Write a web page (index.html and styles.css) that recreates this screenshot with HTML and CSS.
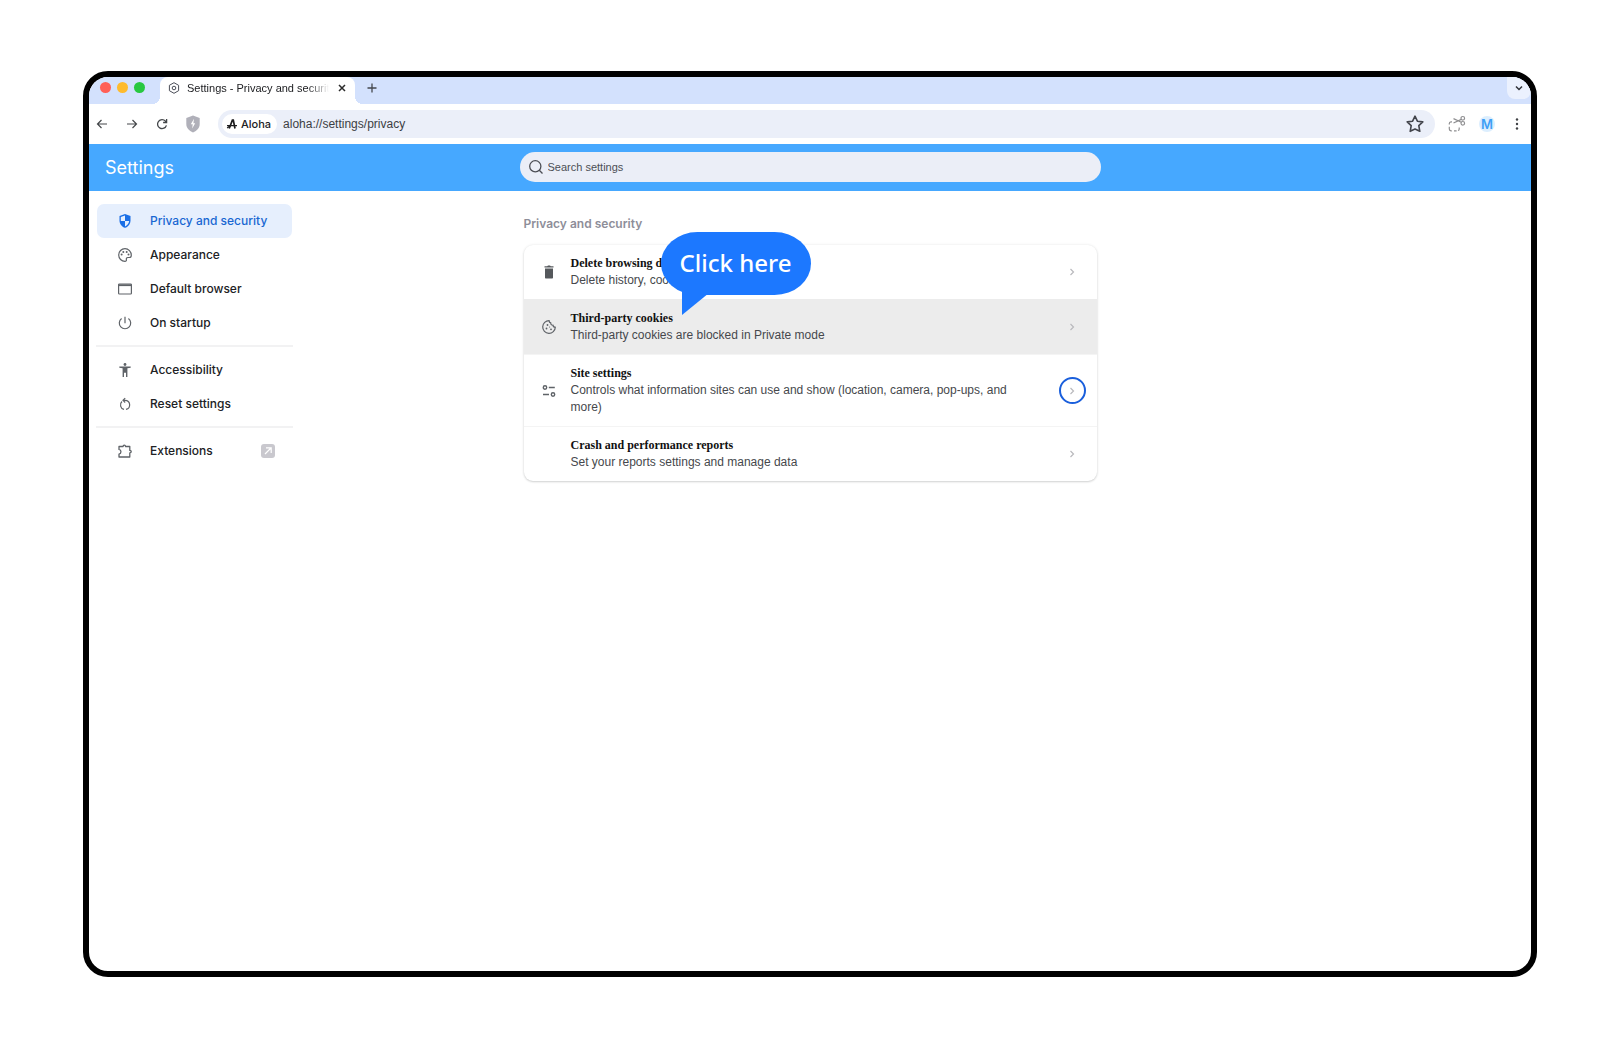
FILE: index.html
```html
<!DOCTYPE html>
<html lang="en">
<head>
<meta charset="utf-8">
<meta name="viewport" content="width=device-width, initial-scale=1">
<title>Settings - Privacy and security</title>
<link rel="stylesheet" href="styles.css">
</head>
<body>
<div class="window">
  <div class="tabstrip">
    <div class="lights"><span class="light red"></span><span class="light yellow"></span><span class="light green"></span></div>
    <div class="tab">
      <svg class="i12" viewBox="0 0 12 12" fill="none" stroke="#4a4d57"><path d="M6 .7 10.6 3.300v5.400L6 11.300 1.400 8.700V3.300z" stroke-linejoin="round"/><circle cx="6" cy="6" r="1.800"/></svg>
      <span class="tab-title">Settings - Privacy and security</span>
      <button class="icon-btn" aria-label="Close tab"><svg class="i8" viewBox="0 0 8 8" fill="none" stroke="#2b2b2b" stroke-width="1.500"><path d="M1 1l6 6M7 1 1 7"/></svg></button>
    </div>
    <button class="icon-btn new-tab" aria-label="New tab"><svg class="i10" viewBox="0 0 10 10" fill="none" stroke="#44474e" stroke-width="1.300"><path d="M5 .5v9M.5 5h9"/></svg></button>
    <button class="tab-search" aria-label="Search tabs"><svg class="i8" viewBox="0 0 8 8" fill="none" stroke="#303238" stroke-width="1.500"><path d="M1 2.500l3 3 3-3"/></svg></button>
  </div>

  <div class="toolbar">
    <div class="nav-buttons">
      <button class="icon-btn" aria-label="Back"><svg class="i12" viewBox="0 0 12 12" fill="none" stroke="#44474a" stroke-width="1.200"><path d="M11 6H1.500M5.500 2 1.500 6l4 4"/></svg></button>
      <button class="icon-btn" aria-label="Forward"><svg class="i12" viewBox="0 0 12 12" fill="none" stroke="#44474a" stroke-width="1.200"><path d="M1 6h9.500M6.500 2l4 4-4 4"/></svg></button>
      <button class="icon-btn" aria-label="Reload"><svg class="i12" viewBox="0 0 12 12" fill="none" stroke="#44474a" stroke-width="1.300"><path d="M10.400 7.300A4.500 4.500 0 1 1 9.500 3.200l1 1.100M10.600 1v3.500H7.100"/></svg></button>
      <button class="icon-btn" aria-label="Shields"><svg class="shield" viewBox="0 0 14 18"><path d="M7 .5 13.700 3v6c0 4-2.700 6.800-6.700 8.500C3 15.800.3 13 .3 9V3z" fill="#b0b0b9"/><path d="M8 3.800 4.800 9.300h1.900L6.200 13.400l3-5.200H7.400z" fill="#fff"/></svg></button>
    </div>
    <div class="omnibox">
      <button class="chip"><svg class="i12" viewBox="0 0 12 12" fill="none" stroke="#1c1c1e"><path d="M3.200 10.500 6.400 2.200h.9L9 10.500" stroke-width="1.700"/><path d="M1 7.600h10" stroke-width="1.400"/><path d="M1.200 10 4 7.800" stroke-width="1.300"/></svg>Aloha</button>
      <input class="url" type="text" aria-label="Address" value="aloha://settings/privacy">
      <button class="icon-btn" aria-label="Bookmark this tab"><svg class="i18" viewBox="0 0 18 18" fill="none" stroke="#44464d" stroke-width="1.600" stroke-linejoin="round"><path d="M9 1.200l2.400 5 5.400.7-4 3.800 1 5.600L9 14l-4.800 2.300 1-5.600-4-3.800 5.400-.7z"/></svg></button>
    </div>
    <div class="actions">
      <button class="icon-btn" aria-label="Screenshot"><svg class="i18" viewBox="0 0 18 18" fill="none" stroke="#8f8f91" stroke-width="1.200"><circle cx="14.800" cy="3.300" r="1.800"/><circle cx="14.800" cy="8.300" r="1.800"/><path d="M13.300 4.400 5.500 8M13.300 7.200 5.500 3.600"/><path d="M4 6.800H3A1.800 1.800 0 0 0 1.300 8.600V9.500M1.300 11.800v2.200A1.800 1.800 0 0 0 3 15.800h.8M6 15.800h2.600M10 15.500c.8-.2 1.200-.8 1.200-1.600v-1.500"/></svg></button>
      <button class="avatar" aria-label="Profile">M</button>
      <button class="icon-btn" aria-label="Menu"><svg class="i18" viewBox="0 0 18 18" fill="#3f4145"><circle cx="9" cy="4.500" r="1.200"/><circle cx="9" cy="9" r="1.200"/><circle cx="9" cy="13.500" r="1.200"/></svg></button>
    </div>
  </div>

  <header class="header">
    <h1>Settings</h1>
    <label class="search">
      <svg class="i14" viewBox="0 0 14 14" fill="none" stroke="#4c4e55" stroke-width="1.300"><circle cx="6.300" cy="6.300" r="5.600"/><path d="M10.300 10.300 13.500 13.500"/></svg>
      <input type="search" placeholder="Search settings" aria-label="Search settings">
    </label>
  </header>

  <div class="content">
    <nav class="sidebar">
      <a class="item active" href="#privacy"><svg class="i14" viewBox="0 0 14 14"><path d="M7 0 12.500 2v4.400c0 3.400-2.300 6.300-5.500 7.400C3.800 12.700 1.500 9.800 1.500 6.400V2z" fill="#1a6fe6"/><path d="M7 1.600V7H2.800V3.100zM7 7h4.200c-.3 2.500-2 4.500-4.200 5.400z" fill="#e6effd"/></svg>Privacy and security</a>
      <a class="item" href="#appearance"><svg class="i14" viewBox="0 0 14 14" fill="none" stroke="#5f6368" stroke-width="1.200"><path d="M7 .7a6.300 6.300 0 1 0 0 12.600c1 0 1.500-.7 1.400-1.500-.2-1.300-.1-2.300 1.500-2.300h1.400c1.300 0 2-1 2-2.300C13.300 3.500 10.500.7 7 .7z"/><g fill="#5f6368" stroke="none"><circle cx="3.600" cy="6.600" r="1"/><circle cx="5.300" cy="3.900" r="1"/><circle cx="8.700" cy="3.900" r="1"/><circle cx="10.500" cy="6.500" r="1"/></g></svg>Appearance</a>
      <a class="item" href="#browser"><svg class="i14" viewBox="0 0 14 14" fill="none" stroke="#5f6368" stroke-width="1.200"><rect x=".6" y="2" width="12.800" height="10" rx=".8"/><path d="M.6 3.200h12.800" stroke-width="1.800"/></svg>Default browser</a>
      <a class="item" href="#startup"><svg class="i14" viewBox="0 0 14 14" fill="none" stroke="#5f6368" stroke-width="1.200"><path d="M7 .8v6.400M3.600 2.500a5.700 5.700 0 1 0 6.800 0"/></svg>On startup</a>
      <hr>
      <a class="item" href="#accessibility"><svg class="i14" viewBox="0 0 14 14" fill="#5f6368"><circle cx="7" cy="1.500" r="1.400"/><path d="M1.300 3.500h11.400v1.300L9.400 5.200V14H8V9.800H6V14H4.600V5.200l-3.300-.4z"/></svg>Accessibility</a>
      <a class="item" href="#reset"><svg class="i14" viewBox="0 0 14 14" fill="none" stroke="#5f6368" stroke-width="1.200"><path d="M6 12.400A4.600 4.600 0 0 1 4 4.500M8 12.400a4.600 4.600 0 0 0-1-9.100H5.300M7.200 1.100 5 3.300l2.200 2.200"/></svg>Reset settings</a>
      <hr>
      <a class="item" href="#extensions"><svg class="i14" viewBox="0 0 14 14" fill="none" stroke="#5f6368" stroke-width="1.300" stroke-linejoin="round"><path d="M1 2.500h4.100c0-1.900 2.400-1.900 2.400 0H11.800v3.900c1.900 0 1.900 2.400 0 2.400V13H1V10.200c2.600-.6 2.600-4.200 0-4.800z"/></svg>Extensions<svg class="i14 external" viewBox="0 0 14 14" fill="none"><rect width="14" height="14" rx="3" fill="#c9c8ce"/><path d="M4 10l5.500-5.500M5 3.800h5.200V9" stroke="#fff" stroke-width="1.200"/></svg></a>
    </nav>

    <main class="main">
      <h2>Privacy and security</h2>
      <div class="card">
        <section class="row">
          <svg class="i14" viewBox="0 0 14 14" fill="#55585c"><path d="M2.500 1.200h2.700L6 .4h2l.8.800h2.700v1.400h-9zM3 3.400h8v9.200c0 .6-.4 1-1 1H4c-.6 0-1-.4-1-1z"/></svg>
          <div class="text"><h3>Delete browsing data</h3><p>Delete history, cookies, cache, and more</p></div>
          <button class="go" aria-label="Delete browsing data"><svg class="i8" viewBox="0 0 8 8"><path d="M2.500 1l3 3-3 3"/></svg></button>
        </section>
        <section class="row hover">
          <svg class="i14" viewBox="0 0 14 14" fill="none" stroke="#5f6368" stroke-width="1.200"><path d="M7.200.7a6.300 6.300 0 1 0 6.100 6.500c-1.300 0-2.200-.8-2.200-2-1.500.2-2.600-.9-2.300-2.300C7.700 2.700 7.100 1.800 7.200.7z" stroke-linejoin="round"/><g fill="#5f6368" stroke="none"><circle cx="5.500" cy="5" r=".9"/><circle cx="4.500" cy="8.500" r=".9"/><circle cx="9" cy="9.300" r=".9"/><circle cx="7.600" cy="7" r=".6"/></g></svg>
          <div class="text"><h3>Third-party cookies</h3><p>Third-party cookies are blocked in Private mode</p></div>
          <button class="go" aria-label="Third-party cookies"><svg class="i8" viewBox="0 0 8 8"><path d="M2.500 1l3 3-3 3"/></svg></button>
        </section>
        <section class="row">
          <svg class="i14" viewBox="0 0 14 14" fill="none" stroke="#5f6368" stroke-width="1.400"><circle cx="3" cy="3.500" r="1.700"/><circle cx="11" cy="10.500" r="1.700"/><path d="M6.800 3.500h6M1 10.500h6"/></svg>
          <div class="text"><h3>Site settings</h3><p>Controls what information sites can use and show (location, camera, pop-ups, and more)</p></div>
          <button class="go focused" aria-label="Site settings"><svg class="i8" viewBox="0 0 8 8"><path d="M2.500 1l3 3-3 3"/></svg></button>
        </section>
        <section class="row no-icon">
          <div class="text"><h3>Crash and performance reports</h3><p>Set your reports settings and manage data</p></div>
          <button class="go" aria-label="Crash and performance reports"><svg class="i8" viewBox="0 0 8 8"><path d="M2.500 1l3 3-3 3"/></svg></button>
        </section>
        <div class="callout">Click here<svg class="tail" viewBox="0 0 30 28"><path d="M0 0v28L27 6V0z" fill="#1c78ff"/></svg></div>
      </div>
    </main>
  </div>
</div>
</body>
</html>
```
FILE: styles.css
```css
* { box-sizing: border-box; }

body {
  margin: 0;
  min-height: 100vh;
  padding: 71px 84px 71px 83px;
  display: flex;
  background: #fff;
  font-family: Inter, "Liberation Sans", sans-serif;
  font-size: 12px;
  color: #202124;
}

h1, h2, h3, p { margin: 0; }
svg { display: block; flex: none; }
button, input { font: inherit; color: inherit; border: 0; padding: 0; background: none; }

.i8 { width: 8px; height: 8px; }
.i10 { width: 10px; height: 10px; }
.i12 { width: 12px; height: 12px; }
.i14 { width: 14px; height: 14px; }
.i18 { width: 18px; height: 18px; }
.shield { width: 14px; height: 18px; }
.icon-btn { display: flex; align-items: center; justify-content: center; }

.window {
  flex: 1;
  min-width: 0;
  border: 6px solid #000;
  border-radius: 25px;
  overflow: hidden;
}

/* Tab strip */
.tabstrip {
  display: flex;
  height: 27px;
  background: #d3e1fd;
}
.lights {
  display: flex;
  align-items: center;
  gap: 6px;
  width: 71px;
  padding: 0 0 6px 11px;
}
.light { width: 11px; height: 11px; border-radius: 50%; }
.red { background: #ff5f57; }
.yellow { background: #febb2e; }
.green { background: #28c840; }
.tab {
  position: relative;
  display: flex;
  align-items: center;
  width: 195px;
  padding: 0 9px 6px 8px;
  border-radius: 8px 8px 0 0;
  background: #fff;
}
.tab::before, .tab::after {
  content: "";
  position: absolute;
  bottom: 0;
  width: 8px;
  height: 8px;
}
.tab::before { left: -8px; background: radial-gradient(circle at 0 0, transparent 8px, #fff 8px); }
.tab::after { right: -8px; background: radial-gradient(circle at 100% 0, transparent 8px, #fff 8px); }
.tab-title {
  flex: 1;
  margin: 0 9px 0 7px;
  overflow: hidden;
  white-space: nowrap;
  font-family: "Liberation Sans", sans-serif;
  font-size: 11px;
  line-height: 16px;
  -webkit-mask-image: linear-gradient(to right, #000 85%, transparent);
  mask-image: linear-gradient(to right, #000 85%, transparent);
}
.new-tab { width: 34px; padding-bottom: 6px; }
.tab-search {
  display: flex;
  align-items: center;
  justify-content: center;
  width: 24px;
  height: 22px;
  margin-left: auto;
  border-radius: 0 0 8px 8px;
  background: #ebf1fe;
}

/* Toolbar */
.toolbar {
  display: flex;
  align-items: center;
  height: 40px;
  padding: 0 5px 1px 7px;
}
.nav-buttons { display: flex; align-items: center; gap: 18px; width: 122px; }
.omnibox {
  flex: 1;
  display: flex;
  align-items: center;
  height: 28px;
  padding: 0 11px 0 4px;
  border-radius: 14px;
  background: #ebeff9;
}
.chip {
  display: flex;
  align-items: center;
  gap: 3px;
  height: 20px;
  padding: 0 6px 0 4px;
  border-radius: 10px;
  background: #fff;
  font-size: 11px;
  font-weight: 500;
}
.url {
  flex: 1;
  margin-left: 6px;
  color: #3c3e43;
  font-family: "Liberation Sans", sans-serif;
  outline: 0;
}
.actions { display: flex; align-items: center; gap: 13px; margin-left: 13px; }
.avatar {
  width: 16px;
  height: 16px;
  border-radius: 50%;
  background: #dceefe;
  color: #3d9ff5;
  font-size: 13px;
  font-weight: 600;
  line-height: 16px;
}

/* Blue header */
.header {
  display: grid;
  grid-template-columns: 1fr minmax(0, 581px) 1fr;
  align-items: center;
  height: 47px;
  padding: 0 8px;
  background: #46a8ff;
}
h1 { padding-left: 8px; color: #fff; font-size: 18px; font-weight: 400; }
.search {
  display: flex;
  align-items: center;
  gap: 5px;
  height: 30px;
  margin-bottom: 1px;
  padding: 0 9px;
  border-radius: 15px;
  background: #ebeef7;
}
.search input {
  flex: 1;
  font-family: "Liberation Sans", sans-serif;
  font-size: 11px;
  outline: 0;
  appearance: none;
}
.search input::placeholder { color: #4c4e55; opacity: 1; }

/* Page */
.content {
  display: grid;
  grid-template-columns: 1fr minmax(0, 573px) 1fr;
  align-items: start;
  padding: 13px 8px 0;
}
.sidebar { width: 195px; }
.item {
  display: flex;
  align-items: center;
  gap: 18px;
  height: 34px;
  padding: 0 17px 1px 21px;
  border-radius: 7px;
  color: #202124;
  font-weight: 500;
  text-decoration: none;
}
.active { background: #e6effd; color: #1967d2; }
.external { margin-left: auto; }
hr { height: 2px; margin: 5px -1px 6px; border: 0; background: #f2f2f3; }

h2 {
  margin-bottom: 12px;
  padding-top: 11px;
  color: #8e8e99;
  font-size: 12px;
  font-weight: 600;
  line-height: 18px;
}
.card {
  position: relative;
  border-radius: 9px;
  background: #fff;
  box-shadow: 0 1px 2px rgba(60, 64, 67, .2), 0 0 3px rgba(60, 64, 67, .1);
}
.row { display: flex; align-items: center; padding: 10px 11px 10px 18px; }
.row + .row { border-top: 1px solid #f4f4f4; }
.row.hover { border-color: #ececec; background: #ececec; }
.no-icon .text { margin-left: 29px; }
.text { flex: 1; margin: 0 38px 0 15px; line-height: 17px; }
h3 {
  color: #111;
  font-family: "Liberation Serif", serif;
  font-size: 12px;
  font-weight: 700;
  line-height: 17px;
}
.text p { color: #46484c; font-family: "Liberation Sans", sans-serif; }
.go {
  display: flex;
  align-items: center;
  justify-content: center;
  width: 27px;
  height: 27px;
  border-radius: 50%;
}
.go path { fill: none; stroke: #b9b9bd; stroke-width: 1.200; }
.focused { border: 2px solid #1a5fdc; }

/* Callout over the list */
.callout {
  position: absolute;
  left: 137px;
  top: -13px;
  width: 150px;
  height: 63px;
  border-radius: 37px / 32px;
  background: #1c78ff;
  color: #fff;
  font: 500 24px/62px "Noto Sans", sans-serif;
  text-align: center;
}
.tail { position: absolute; left: 21px; top: 55px; width: 30px; height: 28px; }
```
